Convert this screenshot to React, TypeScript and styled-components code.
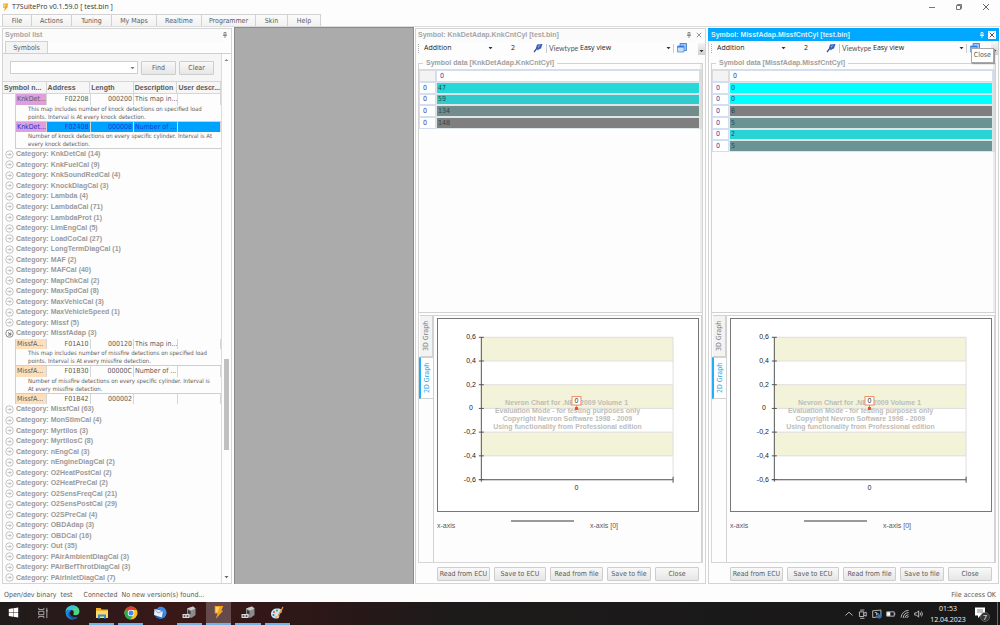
import React from "react";
import styled, { createGlobalStyle, css } from "styled-components";

const ui = `"DejaVu Sans Condensed", "Noto Sans", sans-serif`;
const strong = `"Liberation Sans", "Noto Sans", sans-serif`;
const segoe = `"Open Sans", "Noto Sans", sans-serif`;

const Global = createGlobalStyle`
  * { box-sizing: border-box; }
  body { margin: 0; background: #fdfdfd; }
  button, input, select { font: inherit; color: inherit; margin: 0; padding: 0; }
`;

const Screen = styled.div`
  display: flex;
  flex-direction: column;
  height: 100vh;
  overflow: hidden;
  font: 7px/8px ${ui};
  color: #5a5a5a;
`;

/* Title bar and menu */
const TitleBar = styled.header`
  display: flex;
  align-items: center;
  height: 14px;
  padding: 0 9px 0 1px;
  gap: 2px;
  font: 7px/14px ${segoe};
  color: #333;
`;
const Title = styled.h1`
  flex: 1;
  margin: 0;
  font: inherit;
`;
const WindowButton = styled.button`
  display: flex;
  align-items: center;
  justify-content: center;
  width: 10px;
  height: 12px;
  margin-left: 15px;
  border: 0;
  background: none;
`;
const Menu = styled.nav`
  display: flex;
  height: 13px;
  padding-left: 2px;
  border-bottom: 1px solid #dcdcdc;
`;
const MenuItem = styled.button<{ $w: number }>`
  width: ${(p) => p.$w}px;
  border: 1px solid #d2d2d2;
  border-width: 1px 1px 0 0;
  background: linear-gradient(#fbfbfb, #f1f1f1);
  text-align: center;
  &:first-child { border-left-width: 1px; }
`;

/* Workspace */
const Workspace = styled.main`
  display: flex;
  flex: 1;
  min-height: 0;
`;
const MdiArea = styled.div`
  flex: 1;
  border: 1px solid #8b8b8b;
  border-bottom: 0;
  background: #ababab;
`;
const Dock = styled.section<{ $side?: boolean }>`
  display: flex;
  flex-direction: column;
  flex: none;
  width: ${(p) => (p.$side ? 234 : 293)}px;
  padding: ${(p) => (p.$side ? "1px 2px 0 2px" : "1px 1px 0 1px")};
`;
const DockFrame = styled.div`
  position: relative;
  display: flex;
  flex-direction: column;
  flex: 1;
  min-height: 0;
  border: 1px solid #d4d4d4;
  background: #fdfdfd;
`;
const DockHeader = styled.header<{ $active?: boolean }>`
  display: flex;
  align-items: center;
  flex: none;
  height: 12px;
  padding: 0 2px;
  font-family: ${strong};
  font-weight: bold;
  color: #a6a6a6;
  background: #fbfbfb;
  ${(p) => p.$active && css`
    margin: -1px -1px 0;
    height: 13px;
    padding: 0 3px;
    color: #d8f1ff;
    background: #00a8ff;
  `}
`;
const DockTitle = styled.h2`
  flex: 1;
  margin: 0;
  font: inherit;
`;
const HeaderButton = styled.button<{ $boxed?: boolean }>`
  display: flex;
  align-items: center;
  justify-content: center;
  width: 8px;
  height: 8px;
  margin-left: 2px;
  border: 0;
  color: #777;
  background: ${(p) => (p.$boxed ? "#fff" : "none")};
`;

/* Symbol list */
const TabStrip = styled.div`
  display: flex;
  flex: none;
  height: 13px;
  padding: 0 2px;
  border-bottom: 1px solid #cfcfcf;
`;
const SymbolsTab = styled.button`
  width: 43px;
  border: 1px solid #d2d2d2;
  border-bottom: 0;
  background: #f4f4f4;
`;
const ListBody = styled.div`
  display: flex;
  flex: 1;
  min-height: 0;
`;
const ListMain = styled.div`
  display: flex;
  flex-direction: column;
  flex: 1;
  min-width: 0;
  border-right: 1px solid #dcdcdc;
`;
const SearchBar = styled.form`
  display: flex;
  align-items: center;
  gap: 3px;
  flex: none;
  height: 27px;
  padding: 0 7px;
  background: #f5f5f5;
`;
const SearchBox = styled.div`
  display: flex;
  align-items: center;
  flex: 1;
  height: 13px;
  padding-right: 2px;
  border: 1px solid #cfcfcf;
  background: #fff;
`;
const SearchInput = styled.input`
  flex: 1;
  min-width: 0;
  border: 0;
  outline: 0;
  background: none;
`;
const PushButton = styled.button<{ $w: number }>`
  width: ${(p) => p.$w}px;
  height: 14px;
  border: 1px solid #cdcdcd;
  border-radius: 1px;
  background: linear-gradient(#f8f8f8, #e6e6e6);
  text-align: center;
  white-space: nowrap;
`;
const SymbolTable = styled.table`
  display: flex;
  flex-direction: column;
  flex: 1;
  min-height: 0;
  thead { display: block; flex: none; }
  tbody { display: flex; flex-direction: column; flex: 1; min-height: 0; }
  tr { display: flex; }
  td, th { padding: 0; }
`;
const HeadRow = styled.tr`
  height: 13px;
  border: 1px solid #d6d6d6;
  border-width: 1px 0;
  background: #f6f6f6;
`;
const HeadCell = styled.th`
  flex: 1;
  border-right: 1px solid #d6d6d6;
  font-family: ${strong};
  line-height: 11px;
  text-align: left;
  white-space: nowrap;
  overflow: hidden;
  && { padding-left: 1px; }
`;
const CategoryRow = styled.tr`
  flex: 1 1 10px;
  align-items: center;
  min-height: 0;
`;
const CategoryButton = styled.button`
  display: flex;
  align-items: center;
  gap: 2px;
  padding-left: 2px;
  border: 0;
  background: none;
  font-family: ${strong};
  font-weight: bold;
  color: #9a9a9a;
  white-space: nowrap;
`;
const DataRow = styled.tr<{ $selected?: boolean }>`
  flex: 1 1 10px;
  min-height: 0;
  margin-left: 12px;
  border-left: 1px solid #cfcfcf;
  ${(p) => p.$selected && css`
    color: #2331d8;
    background: #00a2ff;
  `}
`;
const DataCell = styled.td<{ $tint?: string; $right?: boolean }>`
  flex: 1;
  display: flex;
  align-items: center;
  justify-content: ${(p) => (p.$right ? "flex-end" : "flex-start")};
  border-right: 1px solid #d6d6d6;
  background: ${(p) => p.$tint || "none"};
  white-space: nowrap;
  overflow: hidden;
  && { padding: 0 1px; }
  &:first-child { flex: 0 0 31px; }
`;
const NoteRow = styled.tr`
  flex: none;
  height: 17px;
  margin-left: 12px;
  border: 1px solid #cfcfcf;
  border-width: 0 0 1px 1px;
  font-size: 6px;
  color: #5e5e5e;
  && td { padding-left: 12px; white-space: nowrap; }
`;
const ScrollTrack = styled.div`
  display: flex;
  flex-direction: column;
  align-items: center;
  justify-content: space-between;
  flex: none;
  width: 9px;
  padding: 4px 0;
`;
const ScrollSpace = styled.div<{ $grow: number }>`
  flex: ${(p) => p.$grow};
`;
const ScrollThumb = styled.div`
  flex: 90;
  width: 5px;
  background: #c0c0c0;
`;

/* Map viewer */
const Toolbar = styled.div`
  display: flex;
  align-items: center;
  flex: none;
  height: 14px;
  padding-left: 2px;
  font: 7px/12px ${segoe};
  color: #222;
`;
const Grip = styled.span`
  width: 1px;
  height: 9px;
  margin-right: 5px;
  border-left: 1px dotted #aaa;
`;
const Picker = styled.label<{ $w: number }>`
  display: flex;
  align-items: center;
  flex: none;
  width: ${(p) => p.$w}px;
`;
const Select = styled.select`
  flex: 1;
  min-width: 0;
  appearance: none;
  border: 0;
  background: none;
`;
const Amount = styled.input`
  width: 21px;
  margin-left: 18px;
  border: 0;
  background: none;
`;
const IconButton = styled.button`
  display: flex;
  align-items: center;
  justify-content: center;
  width: 12px;
  height: 12px;
  border: 0;
  background: none;
`;
const Divider = styled.span`
  width: 1px;
  height: 9px;
  margin: 0 2px;
  background: #ccc;
`;
const Caption = styled.span`
  width: 31px;
  font-family: Lato, sans-serif;
  color: #555;
`;
const Overflow = styled.button`
  display: flex;
  align-items: flex-end;
  align-self: flex-end;
  justify-content: center;
  width: 7px;
  height: 12px;
  margin-left: auto;
  padding-bottom: 2px;
  border: 0;
  background: linear-gradient(#f4f4f4, #d0d0d0);
`;
const DataGroup = styled.fieldset`
  flex: 1;
  min-width: 0;
  min-height: 0;
  margin: 4px 2px 0;
  padding: 2px 0 0;
  border: 1px solid #d2d2d2;
  box-shadow: inset -2px 0 #ececec;
`;
const GroupTitle = styled.legend`
  margin-left: 4px;
  padding: 0 3px;
  font-family: ${strong};
  font-weight: bold;
  color: #a0a0a0;
`;
const MapTable = styled.table`
  width: 100%;
  border-collapse: separate;
  border-spacing: 0;
  border: 1px solid #dcdcdc;
  border-width: 1px 2px 0 0;
  tr { height: 12px; }
  tr:nth-child(3n) { height: 11px; }
  th, td { padding: 0 2px; line-height: 9px; text-align: left; font-weight: normal; }
`;
const MapHead = styled.th`
  border: 1px solid #d3dff0;
  color: #3c3c96;
  background: #fff;
  && { padding: 0 3px; }
`;
const Corner = styled.td`
  width: 17px;
  border: 1px solid #dcdcdc;
  background: #f3f3f3;
`;
const MapValue = styled.td<{ $fill: string }>`
  border: 1px solid #dfe6ea;
  background: ${(p) => p.$fill};
  color: #28484c;
  && { padding: 0 1px; }
`;
const GraphArea = styled.div`
  display: flex;
  flex: none;
  height: 250px;
  margin: 0 2px;
  border: 1px solid #d6d6d6;
  border-top: 0;
`;
const SideTabs = styled.div`
  display: flex;
  flex-direction: column;
  width: 14px;
  padding-top: 2px;
`;
const SideTab = styled.button<{ $on?: boolean }>`
  height: 42px;
  margin-left: 1px;
  border: 1px solid #d2d2d2;
  border-width: 1px 0 1px 1px;
  writing-mode: vertical-rl;
  rotate: 180deg;
  background: #f3f3f3;
  color: #808080;
  line-height: 10px;
  ${(p) => p.$on && css`
    margin-left: 0;
    border-right: 2px solid #21aef8;
    border-left: 0;
    background: #fff;
    color: #21a5ea;
  `}
`;
const GraphPage = styled.div`
  display: flex;
  flex-direction: column;
  flex: 1;
  min-width: 0;
  margin-top: 2px;
  padding: 2px 2px 0 3px;
  border: 1px solid #d2d2d2;
  border-width: 1px 1px 0 1px;
`;
const ChartFrame = styled.div`
  display: flex;
  height: 194px;
  border: 1px solid #777;
  background: #fff;
`;
const AxisRow = styled.div`
  display: grid;
  grid-template-columns: 74px 63px 1fr;
  padding-top: 8px;
`;
const AxisLabel = styled.span<{ $gap?: boolean }>`
  padding: 2px 0 0 ${(p) => (p.$gap ? 16 : 0)}px;
  font-family: "Liberation Sans", sans-serif;
`;
const AxisSlider = styled.div`
  height: 2px;
  background: #9a9a9a;
`;
const Actions = styled.footer`
  display: flex;
  align-items: center;
  justify-content: flex-end;
  gap: 4px;
  flex: none;
  height: 20px;
  padding: 1px 6px 0 0;
`;
const Tooltip = styled.div`
  position: absolute;
  top: 19px;
  right: 4px;
  z-index: 1;
  padding: 2px;
  border: 1px solid #a8a8a8;
  background: #fff;
  box-shadow: 1px 1px 1px #9a9a9a;
  line-height: 9px;
`;

/* Status bar and taskbar */
const StatusBar = styled.footer`
  display: flex;
  align-items: center;
  flex: none;
  height: 18px;
  gap: 4px;
  padding: 4px 4px 0;
`;
const StatusText = styled.span<{ $after?: boolean }>`
  margin-right: ${(p) => (p.$after ? "7px" : "0")};
  &:last-child { margin-left: auto; }
`;
const Taskbar = styled.nav`
  display: flex;
  align-items: stretch;
  flex: none;
  height: 23px;
  background: linear-gradient(90deg, #1f1c1c 0, #2a1919 7%, #3c1818 18%, #2e1717 30%, #1d1a1a 45%, #181818 100%);
`;
const TaskList = styled.div`
  display: grid;
  grid-template-columns: repeat(10, 1fr);
  width: 293px;
`;
const Task = styled.button<{ $open?: boolean; $active?: boolean }>`
  display: flex;
  align-items: center;
  justify-content: center;
  margin: 0 3px 0 1px;
  border: 0;
  border-bottom: 2px solid ${(p) => (p.$open ? "#6fb4e6" : "transparent")};
  background: ${(p) => (p.$active ? "#644a4a" : "none")};
  background-clip: padding-box;
`;
const Tray = styled.div`
  display: flex;
  align-items: center;
  gap: 3px;
  margin-left: auto;
  padding-right: 2px;
`;
const TrayButton = styled.button`
  display: flex;
  align-items: center;
  justify-content: center;
  width: 11px;
  height: 20px;
  border: 0;
  background: none;
`;
const Clock = styled.time`
  width: 42px;
  text-align: center;
  color: #f0f0f0;
  font: 7px/11px ${segoe};
`;
const Notify = styled(TrayButton)`
  width: 20px;
  margin-right: 2px;
`;
const DesktopEdge = styled.span`
  align-self: stretch;
  width: 1px;
  background: #666;
`;

/* Icons */
const Bolt = ({ size = 12 }: { size?: number }) => (
  <svg width={size} height={size} viewBox="0 0 16 16" aria-hidden="true">
    <path d="M4 1h9l-2 5h2L5 15l2-6H4z" fill="#f7a11b" />
    <path d="M5 2h4L7 8H5z" fill="#ffd467" />
  </svg>
);
const Pin = ({ color = "#777" }: { color?: string }) => (
  <svg width="6" height="6" viewBox="0 0 6 6" aria-hidden="true">
    <path d="M2 0.500h2v2.500H2zM1 3.500h4M3 4v2" fill="none" stroke={color} strokeWidth=".8" />
  </svg>
);
const Cross = ({ size = 6, color = "#666" }: { size?: number; color?: string }) => (
  <svg width={size} height={size} viewBox="0 0 8 8" aria-hidden="true">
    <path d="M1 1l6 6M7 1L1 7" stroke={color} strokeWidth="1" />
  </svg>
);
const Caret = ({ color = "#333", up }: { color?: string; up?: boolean }) => (
  <svg width="5" height="4" viewBox="0 0 5 4" aria-hidden="true">
    <path d={up ? "M.5 3h4L2.5 1z" : "M.5 1h4L2.5 3.300z"} fill={color} />
  </svg>
);
const Expander = ({ open }: { open?: boolean }) => (
  <svg width="9" height="9" viewBox="0 0 18 18" fill="none" stroke={open ? "#666" : "#b0b0b0"} strokeWidth="1.500" aria-hidden="true">
    <circle cx="9" cy="9" r="7.500" />
    {open ? <path d="M6 7l5 4M11.500 7v5H6.500" strokeWidth="2" /> : <path d="M5 9h7M9 6l3 3-3 3" />}
  </svg>
);
const Wand = () => (
  <svg width="10" height="10" viewBox="0 0 20 20" aria-hidden="true">
    <path d="M2 18l7-9" stroke="#3b4f9c" strokeWidth="2.500" />
    <path d="M8 3l11-1-3 9-5 2-1 2-4-5z" fill="#3a5fb8" />
    <path d="M10 6l5-2-5 6z" fill="#8fb0ec" />
  </svg>
);
const Windows2 = () => (
  <svg width="10" height="10" viewBox="0 0 20 20" aria-hidden="true">
    <path d="M6 1h13v14H6z" fill="#9cc3f2" stroke="#2d6bc4" strokeWidth="1.500" />
    <path d="M1 6h13v12H1z" fill="#c4dffc" stroke="#4a8be0" strokeWidth="1.500" />
    <path d="M1 6h13v3H1z" fill="#2f7ade" />
  </svg>
);

/* Data */
const menu: [string, number][] = [
  ["File", 30], ["Actions", 40], ["Tuning", 40], ["My Maps", 45],
  ["Realtime", 45], ["Programmer", 54], ["Skin", 32], ["Help", 33],
];
const before = [
  "KnkDetCal (14)", "KnkFuelCal (9)", "KnkSoundRedCal (4)", "KnockDiagCal (3)", "Lambda (4)",
  "LambdaCal (71)", "LambdaProt (1)", "LimEngCal (5)", "LoadCoCal (27)", "LongTermDiagCal (1)",
  "MAF (2)", "MAFCal (40)", "MapChkCal (2)", "MaxSpdCal (8)", "MaxVehicCal (3)",
  "MaxVehicleSpeed (1)", "Missf (5)", "MissfAdap (3)",
];
const after = [
  "MissfCal (63)", "MonStimCal (4)", "Myrtilos (3)", "MyrtilosC (8)", "nEngCal (3)",
  "nEngineDiagCal (2)", "O2HeatPostCal (2)", "O2HeatPreCal (2)", "O2SensFreqCal (21)",
  "O2SensPostCal (29)", "O2SPreCal (4)", "OBDAdap (3)", "OBDCal (16)", "Out (35)",
  "PAirAmbientDiagCal (3)", "PAirBefThrotDiagCal (3)", "PAirInletDiagCal (7)",
];
interface SymbolRow {
  name: string;
  address: string;
  length: string;
  text: string;
  note?: [string, string];
  tint: string;
  selected?: boolean;
}
const knock: SymbolRow[] = [
  { name: "KnkDet...", address: "F02208", length: "000200", text: "This map in...", tint: "#dd9fdd",
    note: ["This map includes number of knock detections on specified load", "points. Interval is At every knock detection."] },
  { name: "KnkDet...", address: "F02408", length: "000008", text: "Number of ...", tint: "#dd9fdd", selected: true,
    note: ["Number of knock detections on every specific cylinder. Interval is At", "every knock detection."] },
];
const misfire: SymbolRow[] = [
  { name: "MissfA...", address: "F01A10", length: "000120", text: "This map in...", tint: "#ffdfba",
    note: ["This map includes number of missfire detections on specified load", "points. Interval is At every missfire detection."] },
  { name: "MissfA...", address: "F01B30", length: "00000C", text: "Number of ...", tint: "#ffdfba",
    note: ["Number of missfire detections on every specific cylinder. Interval is", "At every missfire detection."] },
  { name: "MissfA...", address: "F01B42", length: "000002", text: "", tint: "#ffdfba" },
];

const Category = ({ label }: { label: string }) => (
  <CategoryRow>
    <td>
      <CategoryButton>
        <Expander open={label.startsWith("MissfAdap")} />
        Category: {label}
      </CategoryButton>
    </td>
  </CategoryRow>
);

const SymbolRows = ({ rows }: { rows: SymbolRow[] }) => (
  <>
    {rows.map((r) => (
      <React.Fragment key={r.address}>
        <DataRow $selected={r.selected}>
          <DataCell $tint={r.tint}>{r.name}</DataCell>
          <DataCell $right>{r.address}</DataCell>
          <DataCell $right>{r.length}</DataCell>
          <DataCell>{r.text}</DataCell>
          <DataCell />
        </DataRow>
        {r.note && (
          <NoteRow>
            <td>{r.note[0]}<br />{r.note[1]}</td>
          </NoteRow>
        )}
      </React.Fragment>
    ))}
  </>
);

const SymbolList = () => (
  <Dock $side>
    <DockFrame>
      <DockHeader>
        <DockTitle>Symbol list</DockTitle>
        <HeaderButton aria-label="Pin"><Pin /></HeaderButton>
      </DockHeader>
      <TabStrip><SymbolsTab>Symbols</SymbolsTab></TabStrip>
      <ListBody>
        <ListMain>
          <SearchBar onSubmit={(e) => e.preventDefault()}>
            <SearchBox>
              <SearchInput aria-label="Find symbol" />
              <Caret color="#777" />
            </SearchBox>
            <PushButton $w={35}>Find</PushButton>
            <PushButton $w={35} type="button">Clear</PushButton>
          </SearchBar>
          <SymbolTable>
            <thead>
              <HeadRow>
                {["Symbol n...", "Address", "Length", "Description", "User descr..."].map((h) => (
                  <HeadCell key={h}>{h}</HeadCell>
                ))}
              </HeadRow>
            </thead>
            <tbody>
              <SymbolRows rows={knock} />
              {before.map((c) => <Category key={c} label={c} />)}
              <SymbolRows rows={misfire} />
              {after.map((c) => <Category key={c} label={c} />)}
            </tbody>
          </SymbolTable>
        </ListMain>
        <ScrollTrack>
          <Caret up color="#888" />
          <ScrollSpace $grow={296} />
          <ScrollThumb />
          <ScrollSpace $grow={125} />
          <Caret color="#666" />
        </ScrollTrack>
      </ListBody>
    </DockFrame>
  </Dock>
);

const ticks = ["0,6", "0,4", "0,2", "0", "-0,2", "-0,4", "-0,6"];
const watermark = [
  "Nevron Chart for .NET 2009 Volume 1",
  "Evaluation Mode - for testing purposes only",
  "Copyright Nevron Software 1998 - 2009",
  "Using functionality from Professional edition",
];
const Chart = () => (
  <svg width="100%" height="100%" viewBox="0 0 261 192" fontFamily="Liberation Sans, sans-serif" fontSize="7" role="img" aria-label="2D graph">
    {[0, 2, 4].map((i) => <rect key={i} x="43" y={18 + i * 23.8} width="193" height="23.800" fill="#f3f3da" />)}
    {ticks.map((t, i) => <path key={t} d={`M43 ${18 + i * 23.8}h193`} stroke="#dedede" />)}
    <path d="M236 18v143" stroke="#dedede" />
    <g fill="#bdbdb8" fontWeight="bold" textAnchor="middle">
      {watermark.map((w, i) => <text key={w} x={i === 0 ? 129 : 130} y={86 + i * 8}>{w}</text>)}
    </g>
    <path d="M43.500 18v145M41 161h195M236 158v6" stroke="#555" fill="none" />
    {ticks.map((t, i) => (
      <g key={t}>
        <path d={`M41 ${18 + i * 23.8}h5`} stroke="#555" />
        <text x={i === 3 ? 35 : 38} y={20 + i * 23.8} textAnchor="end" fill="#222">{t}</text>
      </g>
    ))}
    <text x="139" y="171" textAnchor="middle" fill="#222">0</text>
    <rect x="134.500" y="77.500" width="9" height="8.500" fill="#fff" stroke="#f08a64" />
    <path d="M139 86v4" stroke="#f08a64" />
    <rect x="137.500" y="88" width="3" height="3" fill="#e8501e" />
    <text x="139" y="84" textAnchor="middle" fill="#222">0</text>
  </svg>
);

interface ViewerProps {
  symbol: string;
  values: [number, string][];
  active?: boolean;
}
const Viewer = ({ symbol, values, active }: ViewerProps) => (
  <Dock>
    <DockFrame>
      <DockHeader $active={active}>
        <DockTitle>Symbol: {symbol} [test.bin]</DockTitle>
        <HeaderButton aria-label="Pin"><Pin color={active ? "#fff" : "#777"} /></HeaderButton>
        <HeaderButton $boxed={active} aria-label="Close"><Cross color={active ? "#222" : "#777"} /></HeaderButton>
      </DockHeader>
      <Toolbar>
        <Grip />
        <Picker $w={69}>
          <Select aria-label="Operation"><option>Addition</option></Select>
          <Caret />
        </Picker>
        <Amount aria-label="Amount" defaultValue="2" />
        <IconButton aria-label="Apply"><Wand /></IconButton>
        <Divider />
        <Picker $w={122}>
          <Caption>Viewtype</Caption>
          <Select><option>Easy view</option></Select>
          <Caret />
        </Picker>
        <Divider />
        <IconButton aria-label="Windows"><Windows2 /></IconButton>
        <Overflow aria-label="More"><Caret /></Overflow>
      </Toolbar>
      <DataGroup>
        <GroupTitle>Symbol data [{symbol}]</GroupTitle>
        <MapTable>
          <tbody>
            <tr><Corner /><MapHead>0</MapHead></tr>
            {values.map(([v, fill], i) => (
              <tr key={i}><MapHead>0</MapHead><MapValue $fill={fill}>{v}</MapValue></tr>
            ))}
          </tbody>
        </MapTable>
      </DataGroup>
      <GraphArea>
        <SideTabs>
          <SideTab>3D Graph</SideTab>
          <SideTab $on>2D Graph</SideTab>
        </SideTabs>
        <GraphPage>
          <ChartFrame><Chart /></ChartFrame>
          <AxisRow>
            <AxisLabel>x-axis</AxisLabel>
            <AxisSlider />
            <AxisLabel $gap>x-axis [0]</AxisLabel>
          </AxisRow>
        </GraphPage>
      </GraphArea>
      <Actions>
        <PushButton $w={53}>Read from ECU</PushButton>
        <PushButton $w={52}>Save to ECU</PushButton>
        <PushButton $w={53}>Read from file</PushButton>
        <PushButton $w={44}>Save to file</PushButton>
        <PushButton $w={44}>Close</PushButton>
      </Actions>
      {active && <Tooltip role="tooltip">Close</Tooltip>}
    </DockFrame>
  </Dock>
);

const Svg = ({ children, size = 14 }: { children: React.ReactNode; size?: number }) => (
  <svg width={size} height={size} viewBox="0 0 28 28" aria-hidden="true">{children}</svg>
);
const Chip = () => (
  <Svg>
    <path d="M10 5l12-4 5 4v13l-8 6-9-4z" fill="#8b8b8b" />
    <path d="M10 5l12-4 5 4-9 4z" fill="#c9c9c9" />
    <path d="M12 8l5 2v7l-5-2z" fill="#3c3c3c" />
    <path d="M1 16h14v8H1z" fill="#d9d9d9" />
    <circle cx="5" cy="20" r="2" fill="#555" /><circle cx="11" cy="20" r="2" fill="#555" />
  </Svg>
);
const tasks: { label: string; icon: React.ReactNode; open?: boolean; active?: boolean }[] = [
  { label: "Start", icon: <Svg size={11}><path d="M2 5l11-2v10H2zM14 3l12-2v12H14zM2 14h11v11L2 23zM14 14h12v13l-12-2z" fill="#fff" /></Svg> },
  { label: "Task view", icon: <Svg size={12}><path d="M4 2v4h12V2M4 26v-4h12v4M4 10h12v8H4zM23 2v24M21 9h4" stroke="#bbb" strokeWidth="2" fill="none" /></Svg> },
  { label: "Edge", icon: <Svg size={15}>
    <path d="M14 1c8 0 13 5 13 11 0 5-4 7-8 7-3 0-4-1-3-3 2-4-2-7-6-7-5 0-8 2-9 4C2 5 8 1 14 1z" fill="#4fd28a" />
    <path d="M1 13C2 5 8 1 14 1c4 0 7 1 9 3-5 0-8 1-10 5-6-1-10 1-12 4z" fill="#36c2dc" />
    <path d="M1 13c2-4 7-5 11-3-4 3-4 9 0 13 3 3 8 3 11 1-6 6-22 4-22-11z" fill="#1b84dd" />
    <path d="M10 12c-3 7 4 12 14 10-4 6-12 6-16 0-3-4-1-9 2-10z" fill="#11569f" />
  </Svg> },
  { label: "Files", open: true, icon: <Svg><path d="M2 4h9l2 3h13v17H2z" fill="#f2b233" /><path d="M2 10h24v14H2z" fill="#ffd968" /><path d="M6 17h16v8h-4v-4h-8v4H6z" fill="#2d8fe0" /></Svg> },
  { label: "Chrome", open: true, icon: <Svg>
    <circle cx="14" cy="14" r="13" fill="#fbc116" />
    <path d="M14 14L3 7a13 13 0 0122.500 1H14z" fill="#e33b2e" />
    <path d="M14 14L3 7a13 13 0 0010 20l6-10z" fill="#2da94f" />
    <circle cx="14" cy="14" r="6.500" fill="#fff" /><circle cx="14" cy="14" r="5" fill="#4285f4" />
  </Svg> },
  { label: "Mail", icon: <Svg>
    <circle cx="15" cy="14" r="12" fill="#2466c2" />
    <path d="M3 6l17 4-2 13L2 18z" fill="#e9eef8" /><path d="M3 6l7 8 10-4" fill="none" stroke="#8ca3cc" strokeWidth="2" />
    <path d="M12 2c11-2 17 7 14 15-2 6-8 9-14 8 7-2 10-6 9-11-1-4-5-7-12-7z" fill="#3f8be6" />
  </Svg> },
  { label: "Flasher", open: true, icon: <Chip /> },
  { label: "T7SuitePro", open: true, active: true, icon: <Bolt size={15} /> },
  { label: "Logger", open: true, icon: <Chip /> },
  { label: "Paint", open: true, icon: <Svg>
    <path d="M2 16C2 8 9 4 16 5c7 0 9 5 7 8-2 2-5 1-5 4s2 4-1 7c-5 3-15 0-15-8z" fill="#c9e3f5" />
    <circle cx="8" cy="12" r="2" fill="#e04a3a" /><circle cx="14" cy="9" r="2" fill="#35a853" />
    <circle cx="7" cy="18" r="2" fill="#2b76d2" /><circle cx="12" cy="22" r="2" fill="#f0b323" />
    <path d="M25 1l2 2-9 17-3 3 1-5z" fill="#e58b35" />
  </Svg> },
];
const tray: [string, React.ReactNode][] = [
  ["Hidden icons", <path d="M4 18l10-9 10 9" />],
  ["Camera", <path d="M6 3h12M4 8h12v13H4zM16 12l7-3v11l-7-3M6 26h12" />],
  ["Sync", <><path d="M2 5l23-2v18L2 24zM8 10h5v8M13 14h6" /><circle cx="21" cy="21" r="5" fill="#2277d4" stroke="#2277d4" /></>],
  ["Battery", <><path d="M2 8h21v12H2zM25 12v4" /><path d="M3 9h9v10H3z" fill="#fff" stroke="none" /></>],
  ["Network", <path d="M3 24A21 21 0 0124 4M9 25A15 15 0 0124 10M14 25a10 10 0 0110-9M19 25a5 5 0 015-4" />],
  ["Volume", <path d="M2 11h5l6-6v18l-6-6H2zM17 10q3 4 0 8M21 7q5 7 0 14" />],
];

export default function App() {
  return (
    <Screen>
      <Global />
      <TitleBar>
        <Bolt size={9} />
        <Title>T7SuitePro v0.1.59.0 [ test.bin ]</Title>
        <WindowButton aria-label="Minimize"><svg width="8" height="8"><path d="M1 4.500h6" stroke="#777" /></svg></WindowButton>
        <WindowButton aria-label="Restore"><svg width="8" height="8" fill="none" stroke="#777"><path d="M1.500 2.500h4v4h-4zM2.500 2.500v-1h4v4h-1" /></svg></WindowButton>
        <WindowButton aria-label="Close window"><Cross size={8} /></WindowButton>
      </TitleBar>
      <Menu>
        {menu.map(([label, w]) => <MenuItem key={label} $w={w}>{label}</MenuItem>)}
      </Menu>
      <Workspace>
        <SymbolList />
        <MdiArea />
        <Viewer symbol="KnkDetAdap.KnkCntCyl" values={[[47, "#26d8d8"], [59, "#30cccd"], [134, "#728c8c"], [148, "#7f7f7f"]]} />
        <Viewer active symbol="MissfAdap.MissfCntCyl" values={[[0, "#00ffff"], [0, "#00ffff"], [6, "#7f7f7f"], [5, "#6a9494"], [2, "#2ad4d5"], [5, "#6a9494"]]} />
      </Workspace>
      <StatusBar>
        <StatusText>Open/dev binary</StatusText>
        <StatusText $after>test</StatusText>
        <StatusText>Connected</StatusText>
        <StatusText>No new version(s) found...</StatusText>
        <StatusText>File access OK</StatusText>
      </StatusBar>
      <Taskbar>
        <TaskList>
          {tasks.map((t) => <Task key={t.label} aria-label={t.label} $open={t.open} $active={t.active}>{t.icon}</Task>)}
        </TaskList>
        <Tray>
          {tray.map(([label, icon]) => (
            <TrayButton key={label} aria-label={label}>
              <svg width="10" height="10" viewBox="0 0 28 28" fill="none" stroke="#ddd" strokeWidth="2.200" aria-hidden="true">{icon}</svg>
            </TrayButton>
          ))}
          <Clock>01:53<br />12.04.2023</Clock>
          <Notify aria-label="Notifications">
            <svg width="16" height="16" viewBox="0 0 32 32" aria-hidden="true">
              <path d="M2 3h20v16h-9l-5 5v-5H2z" fill="#fff" />
              <path d="M6 8h12M6 12h12" stroke="#555" strokeWidth="1.500" />
              <circle cx="22" cy="22" r="9" fill="#333" stroke="#888" />
              <text x="22" y="27" textAnchor="middle" fontSize="14" fill="#fff" fontFamily="Open Sans">7</text>
            </svg>
          </Notify>
          <DesktopEdge />
        </Tray>
      </Taskbar>
    </Screen>
  );
}
